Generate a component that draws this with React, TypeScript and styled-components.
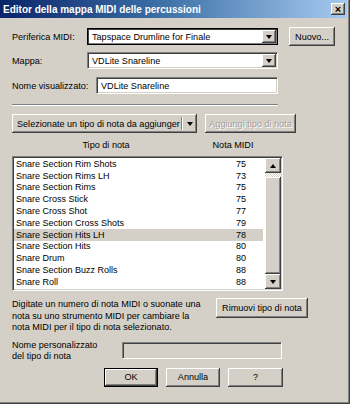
import React from 'react';
import styled, { createGlobalStyle, css } from 'styled-components';

const GlobalStyle = createGlobalStyle`
  html, body { margin: 0; padding: 0; background: #d4d0c8; }
  body { font-family: "Liberation Sans", Arial, sans-serif; font-size: 9.1px; color: #000; }
  * { box-sizing: border-box; }
`;

const raised = css`
  background: #d4d0c8;
  border: none;
  box-shadow: inset -1px -1px #404040, inset 1px 1px #ffffff, inset -2px -2px #808080, inset 2px 2px #d4d0c8;
`;

const sunken = css`
  border: 1px solid;
  border-color: #808080 #ffffff #ffffff #808080;
  box-shadow: inset 1px 1px #404040, inset -1px -1px #d4d0c8;
`;

const Window = styled.div`
  width: 350px;
  height: 404px;
  background: #d4d0c8;
  padding: 0 3px 4px 0;
  display: flex;
  flex-direction: column;
  box-shadow: inset -1px -1px #404040, inset -2px -2px #808080, inset -3px -3px #d4d0c8;
  overflow: hidden;
`;

const TitleBar = styled.div`
  height: 18px;
  flex: none;
  display: flex;
  align-items: center;
  padding: 0 2px 0 3px;
  background: linear-gradient(to right, #0a246a 0%, #3a6ea5 45%, #a6caf0 100%);
  color: #fff;
  font-weight: bold;
  font-size: 10px;
`;

const TitleText = styled.span`
  flex: 1;
  white-space: nowrap;
`;

const CloseButton = styled.div`
  ${raised};
  width: 14px;
  height: 12px;
  color: #000;
  display: flex;
  align-items: center;
  justify-content: center;
  font-size: 11px;
  font-weight: bold;
  line-height: 1;
`;

const Body = styled.div`
  flex: 1;
  display: flex;
  flex-direction: column;
  padding: 0 0 0 12px;
`;

const FieldRow = styled.div<{ $top: number; $h?: number }>`
  display: flex;
  align-items: center;
  margin-top: ${p => p.$top}px;
  height: ${p => p.$h ?? 19}px;
`;

const Label = styled.span<{ $w: number }>`
  width: ${p => p.$w}px;
  flex: none;
  white-space: nowrap;
`;

const Combo = styled.div<{ $w: number; $focus?: boolean }>`
  ${sunken};
  width: ${p => p.$w}px;
  height: 17px;
  background: #fff;
  display: flex;
  align-items: stretch;
  padding: 1px;
  ${p => p.$focus && css`
    border-color: #000;
    box-shadow: inset 1px 1px #404040, inset -1px -1px #808080;
  `}
`;

const ComboText = styled.span`
  flex: 1;
  padding-left: 3px;
  display: flex;
  align-items: center;
  white-space: nowrap;
`;

const DropButton = styled.div`
  ${raised};
  width: 14px;
  flex: none;
  display: flex;
  align-items: center;
  justify-content: center;
`;

const Arrow = styled.span<{ $up?: boolean }>`
  width: 0;
  height: 0;
  border-left: 3.5px solid transparent;
  border-right: 3.5px solid transparent;
  ${p => p.$up ? css`border-bottom: 4px solid #000;` : css`border-top: 4px solid #000;`}
`;

const TextInput = styled.div<{ $w: number; $disabled?: boolean }>`
  ${sunken};
  width: ${p => p.$w}px;
  height: 17px;
  background: ${p => (p.$disabled ? '#d4d0c8' : '#fff')};
  padding-left: 4px;
  display: flex;
  align-items: center;
  white-space: nowrap;
`;

const Button = styled.div<{ $w: number; $h?: number; $default?: boolean; $disabled?: boolean }>`
  ${raised};
  width: ${p => p.$w}px;
  height: ${p => p.$h ?? 19}px;
  flex: none;
  display: flex;
  align-items: center;
  justify-content: center;
  white-space: nowrap;
  color: ${p => (p.$disabled ? '#a0a0a0' : '#000')};
  ${p => p.$disabled && css`text-shadow: 1px 1px #ffffff;`}
  ${p => p.$default && css`
    box-shadow: inset 0 0 0 1px #000, inset -2px -2px #404040, inset 2px 2px #ffffff, inset -3px -3px #808080;
  `}
`;

const Separator = styled.div`
  margin-top: 9px;
  width: 266px;
  height: 2px;
  border-top: 1px solid #808080;
  border-bottom: 1px solid #ffffff;
`;

const SplitButton = styled.div`
  ${raised};
  width: 185px;
  height: 19px;
  display: flex;
  align-items: center;
  flex: none;
`;

const SplitText = styled.span`
  flex: 1;
  padding-left: 5px;
  white-space: nowrap;
  overflow: hidden;
`;

const SplitDivider = styled.span`
  width: 2px;
  height: 13px;
  border-left: 1px solid #808080;
  border-right: 1px solid #ffffff;
`;

const SplitArrow = styled.span`
  width: 14px;
  display: flex;
  justify-content: center;
`;

const HeaderRow = styled.div`
  margin-top: 6px;
  height: 12px;
  display: flex;
  align-items: center;
  width: 271px;
`;

const HeaderCell = styled.span<{ $w: number }>`
  width: ${p => p.$w}px;
  text-align: center;
  white-space: nowrap;
`;

const ListBox = styled.div`
  ${sunken};
  margin-top: 5px;
  width: 271px;
  height: 135px;
  background: #fff;
  display: flex;
  padding: 1px;
`;

const ListItems = styled.div`
  flex: 1;
  display: flex;
  flex-direction: column;
`;

const ListRow = styled.div<{ $sel?: boolean }>`
  height: 11.8px;
  margin: 0 2px 0 0;
  padding: 0 17px 0 2px;
  display: flex;
  align-items: center;
  background: ${p => (p.$sel ? '#d4d0c8' : 'transparent')};
  font-size: 9px;
  white-space: nowrap;
`;

const RowName = styled.span`
  flex: 1;
`;

const RowNum = styled.span`
  width: 20px;
  text-align: right;
`;

const ScrollBar = styled.div`
  width: 16px;
  flex: none;
  display: flex;
  flex-direction: column;
  background-color: #eeede9;
  background-image: repeating-conic-gradient(#d4d0c8 0 25%, #ffffff 0 50%);
  background-size: 2px 2px;
`;

const ScrollButton = styled.div`
  ${raised};
  height: 15px;
  flex: none;
  display: flex;
  align-items: center;
  justify-content: center;
`;

const ScrollTrack = styled.div`
  height: 4px;
  flex: none;
`;

const ScrollThumb = styled.div`
  ${raised};
  flex: 1;
`;

const InfoRow = styled.div`
  margin-top: 8px;
  display: flex;
  align-items: flex-start;
`;

const InfoText = styled.p`
  margin: 0;
  width: 204px;
  line-height: 11.5px;
  white-space: nowrap;
`;

const RemoveButton = styled(Button)`
  margin-top: -1px;
`;

const CustomRow = styled.div`
  margin-top: 6px;
  display: flex;
  align-items: center;
`;

const CustomLabel = styled.p`
  margin: 0;
  width: 110px;
  line-height: 11px;
`;

const DialogButtons = styled.div`
  margin-top: 6px;
  margin-left: 92px;
  display: flex;
  gap: 8px;
`;

const items: [string, number][] = [
  ['Snare Section Rim Shots', 75],
  ['Snare Section Rims LH', 73],
  ['Snare Section Rims', 75],
  ['Snare Cross Stick', 75],
  ['Snare Cross Shot', 77],
  ['Snare Section Cross Shots', 79],
  ['Snare Section Hits LH', 78],
  ['Snare Section Hits', 80],
  ['Snare Drum', 80],
  ['Snare Section Buzz Rolls', 88],
  ['Snare Roll', 88],
];

export default function App() {
  return (
    <>
      <GlobalStyle />
      <Window>
        <TitleBar>
          <TitleText>Editor della mappa MIDI delle percussioni</TitleText>
          <CloseButton>×</CloseButton>
        </TitleBar>
        <Body>
          <FieldRow $top={9}>
            <Label $w={75}>Periferica MIDI:</Label>
            <Combo $w={191} $focus>
              <ComboText>Tapspace Drumline for Finale</ComboText>
              <DropButton><Arrow /></DropButton>
            </Combo>
            <Button $w={46} style={{ marginLeft: 11 }}>Nuovo...</Button>
          </FieldRow>
          <FieldRow $top={5}>
            <Label $w={75}>Mappa:</Label>
            <Combo $w={191}>
              <ComboText>VDLite Snareline</ComboText>
              <DropButton><Arrow /></DropButton>
            </Combo>
          </FieldRow>
          <FieldRow $top={6}>
            <Label $w={84}>Nome visualizzato:</Label>
            <TextInput $w={182}>VDLite Snareline</TextInput>
          </FieldRow>
          <Separator />
          <FieldRow $top={8}>
            <SplitButton>
              <SplitText>Selezionate un tipo di nota da aggiunger</SplitText>
              <SplitDivider />
              <SplitArrow><Arrow /></SplitArrow>
            </SplitButton>
            <Button $w={91} $disabled style={{ marginLeft: 8 }}>Aggiungi tipo di nota</Button>
          </FieldRow>
          <HeaderRow>
            <HeaderCell $w={188}>Tipo di nota</HeaderCell>
            <HeaderCell $w={66}>Nota MIDI</HeaderCell>
          </HeaderRow>
          <ListBox>
            <ListItems>
              {items.map(([name, num], i) => (
                <ListRow key={name} $sel={i === 6}>
                  <RowName>{name}</RowName>
                  <RowNum>{num}</RowNum>
                </ListRow>
              ))}
            </ListItems>
            <ScrollBar>
              <ScrollButton><Arrow $up /></ScrollButton>
              <ScrollTrack />
              <ScrollThumb />
              <ScrollButton><Arrow /></ScrollButton>
            </ScrollBar>
          </ListBox>
          <InfoRow>
            <InfoText>
              Digitate un numero di nota MIDI o suonate una<br />
              nota su uno strumento MIDI per cambiare la<br />
              nota MIDI per il tipo di nota selezionato.
            </InfoText>
            <RemoveButton $w={92} $h={20}>Rimuovi tipo di nota</RemoveButton>
          </InfoRow>
          <CustomRow>
            <CustomLabel>Nome personalizzato<br />del tipo di nota</CustomLabel>
            <TextInput $w={160} $disabled />
          </CustomRow>
          <DialogButtons>
            <Button $w={54} $default>OK</Button>
            <Button $w={54}>Annulla</Button>
            <Button $w={55}>?</Button>
          </DialogButtons>
        </Body>
      </Window>
    </>
  );
}
